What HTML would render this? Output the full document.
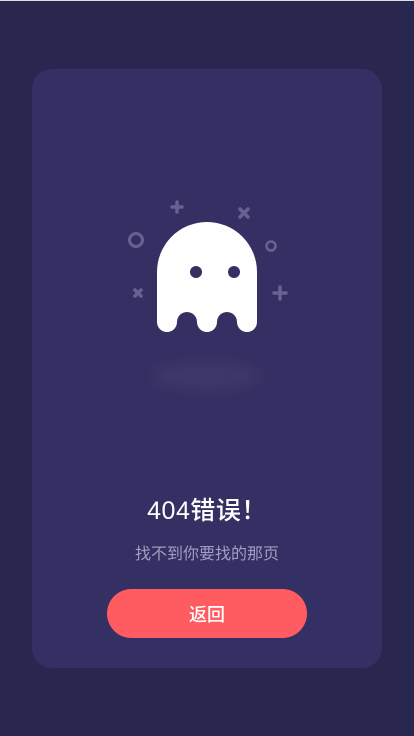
<!DOCTYPE html>
<html><head><meta charset="utf-8"><style>
html,body{margin:0;padding:0;width:414px;height:736px;overflow:hidden;background:#292750;font-family:"Liberation Sans","Noto Sans CJK SC",sans-serif}
.top{position:absolute;left:0;top:0;width:414px;height:1px;background:#ddd}
.card{position:absolute;left:32px;top:69px;width:350px;height:599px;border-radius:20px;background:#353063}
.shadow{position:absolute;left:152px;top:362px;width:110px;height:28px;border-radius:50%;background:rgba(255,255,255,0.045);filter:blur(7px)}
svg{position:absolute;left:0;top:0}
.t{position:absolute;left:0;width:414px;text-align:center;color:#fff}
.btn{position:absolute;left:107px;top:589px;width:200px;height:49px;border-radius:25px;background:#ff5c61;color:#fff;font-size:18px;line-height:53px;text-align:center;font-weight:500}
</style></head><body>
<div class="top"></div>
<div class="card"></div>
<div class="shadow"></div>
<svg width="414" height="736">
<g stroke="#67628f" stroke-width="3.5" fill="none" stroke-linecap="round">
<path d="M177 202v10M172 207h10"/>
<path d="M240 209l8 8M248 209l-8 8"/>
<circle cx="136" cy="240" r="6.5" stroke-width="3"/>
<circle cx="271" cy="246" r="4.5" stroke-width="2.5"/>
<path d="M135 290l6 6M141 290l-6 6"/>
<path d="M280 287v12M274 293h12"/>
</g>
<path fill="#fff" d="M157 272a50 50 0 0 1 100 0v50a10 10 0 0 1-20 0a10 10 0 0 0-20 0a10 10 0 0 1-20 0a10 10 0 0 0-20 0a10 10 0 0 1-20 0z"/>
<circle cx="196" cy="272" r="6" fill="#353063"/>
<circle cx="234" cy="272" r="6" fill="#353063"/>
</svg>
<div class="t" style="top:495px;font-size:25px;line-height:32px;font-weight:500;letter-spacing:0.5px">404错误！</div>
<div class="t" style="top:545px;font-size:16px;line-height:20px;color:#a19dc2">找不到你要找的那页</div>
<div class="btn">返回</div>
</body></html>
